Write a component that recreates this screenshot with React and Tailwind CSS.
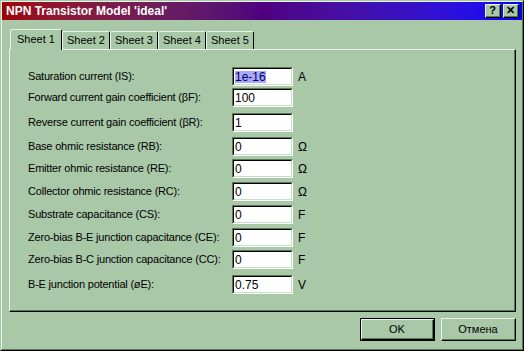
import React from 'react';

const rows = [
  { label: 'Saturation current (IS):', value: '1e-16', unit: 'A', mt: 'mt-0', sel: true },
  { label: 'Forward current gain coefficient (βF):', value: '100', unit: '', mt: 'mt-[2px]' },
  { label: 'Reverse current gain coefficient (βR):', value: '1', unit: '', mt: 'mt-[6px]' },
  { label: 'Base ohmic resistance (RB):', value: '0', unit: 'Ω', mt: 'mt-[5px]' },
  { label: 'Emitter ohmic resistance (RE):', value: '0', unit: 'Ω', mt: 'mt-[3px]' },
  { label: 'Collector ohmic resistance (RC):', value: '0', unit: 'Ω', mt: 'mt-[4px]' },
  { label: 'Substrate capacitance (CS):', value: '0', unit: 'F', mt: 'mt-[4px]' },
  { label: 'Zero-bias B-E junction capacitance (CE):', value: '0', unit: 'F', mt: 'mt-[4px]' },
  { label: 'Zero-bias B-C junction capacitance (CC):', value: '0', unit: 'F', mt: 'mt-[3px]' },
  { label: 'B-E junction potential (øE):', value: '0.75', unit: 'V', mt: 'mt-[6px]' },
];

const tabs = ['Sheet 2', 'Sheet 3', 'Sheet 4', 'Sheet 5'];

function CapButton({ children }) {
  return (
    <div className="w-[16px] h-[14px] border border-t-[#e8f4e8] border-l-[#e8f4e8] border-r-black border-b-black bg-[#a8c8a8]">
      <div className="w-full h-full border-r border-b border-r-[#587858] border-b-[#587858] flex items-center justify-center text-[11px] font-bold leading-none text-black">
        {children}
      </div>
    </div>
  );
}

function Button({ children, isDefault }) {
  return (
    <div className={`w-[75px] h-[23px] ${isDefault ? 'border border-black' : ''}`}>
      <div className="w-full h-full border border-t-[#e8f4e8] border-l-[#e8f4e8] border-r-black border-b-black">
        <div className="w-full h-full border-r border-b border-r-[#587858] border-b-[#587858] flex items-center justify-center text-[11px] text-black">
          {children}
        </div>
      </div>
    </div>
  );
}

export default function App() {
  return (
    <div className="w-[524px] h-[351px] bg-[#a8c8a8] border border-t-[#a8c8a8] border-l-[#a8c8a8] border-r-black border-b-black font-['Liberation_Sans',Arial,sans-serif] select-none">
      <div className="w-full h-full border border-t-[#e8f4e8] border-l-[#e8f4e8] border-r-[#587858] border-b-[#587858] flex flex-col">
        {/* Title bar */}
        <div className="h-[18px] bg-linear-to-r from-[#a00000] via-[#50007f] to-[#0000ff] flex items-center pl-[4px] pr-[3px]">
          <span className="text-white font-bold text-[12px] leading-none flex-1">NPN Transistor Model 'ideal'</span>
          <div className="flex gap-[2px]">
            <CapButton>?</CapButton>
            <CapButton>✕</CapButton>
          </div>
        </div>

        {/* Tabs */}
        <div className="mt-[9px] pl-[7px] pr-[6px] flex flex-col">
          <div className="flex items-end h-[20px] pl-[1px] relative z-10">
            <div className="w-[52px] h-[21px] -mb-px bg-[#a8c8a8] border-t border-l border-t-[#e8f4e8] border-l-[#e8f4e8] border-r border-r-black rounded-tl-[2px] rounded-tr-[2px] flex items-center justify-center text-[11px] text-black pb-[2px]">
              Sheet 1
            </div>
            {tabs.map((t) => (
              <div
                key={t}
                className="w-[48px] h-[18px] border-t border-l border-t-[#e8f4e8] border-l-[#e8f4e8] border-r border-r-black rounded-tl-[2px] rounded-tr-[2px] flex items-center justify-center text-[11px] text-black"
              >
                {t}
              </div>
            ))}
          </div>
          {/* Panel */}
          <div className="h-[263px] border border-t-[#e8f4e8] border-l-[#e8f4e8] border-r-black border-b-black">
            <div className="w-full h-full border-r border-b border-r-[#587858] border-b-[#587858] pl-[18px] pt-[17px] flex flex-col">
              {rows.map((r) => (
                <div key={r.label} className={`flex items-center h-[19px] ${r.mt}`}>
                  <div className="w-[204px] text-[11px] tracking-[-0.2px] text-black whitespace-nowrap">{r.label}</div>
                  <div className="w-[61px] h-[19px] border border-t-[#587858] border-l-[#587858] border-r-white border-b-white">
                    <div className="w-full h-full border border-t-black border-l-black border-r-[#c8e0c8] border-b-[#c8e0c8] bg-white flex items-center pl-[1px] text-[12px] text-black leading-none">
                      {r.sel ? <span className="bg-[#a8a8ff] text-[#000050]">{r.value}</span> : r.value}
                    </div>
                  </div>
                  <div className="ml-[5px] text-[12px] text-black">{r.unit}</div>
                </div>
              ))}
            </div>
          </div>
        </div>

        {/* Buttons */}
        <div className="mt-[6px] pr-[6px] flex justify-end gap-[6px]">
          <Button isDefault>OK</Button>
          <Button>Отмена</Button>
        </div>
      </div>
    </div>
  );
}
